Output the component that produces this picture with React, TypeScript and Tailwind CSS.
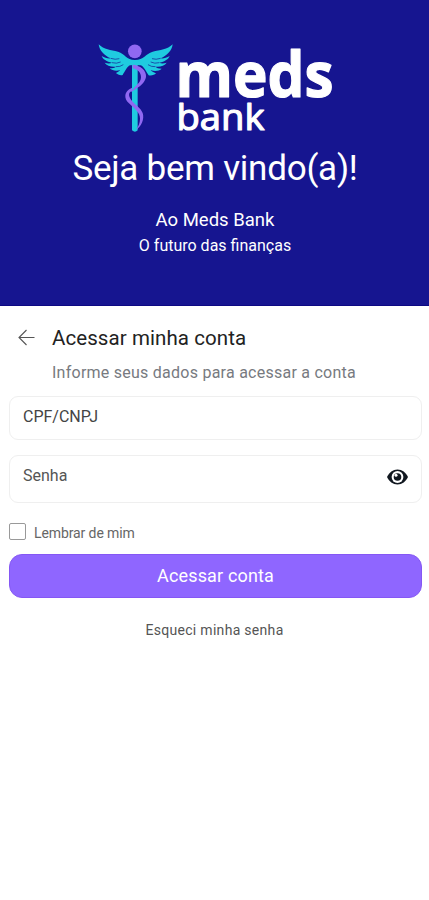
function Logo() {
  return (
    <svg className="block h-[105px] w-[250px] overflow-visible" viewBox="0 0 250 105" aria-label="meds bank">
      <g transform="scale(0.33333)">
        <g fill="#1fcbe0">
          <path d="M26 28 C42 45 62 44 84 50 C106 56 108 75 135 75 L135 90 L120 91 C112 94 104 110 98 120 C90 122 82 118 78 114 C84 111 88 108 91 105 C80 109 66 107 59 100 C68 100 74 98 78 95 C64 97 50 92 44 83 C53 86 60 86 66 83 C50 80 38 72 35 63 C44 69 54 71 62 70 C43 62 28 47 26 28Z" />
          <path d="M248 28 C232 45 210 44 188 50 C166 56 162 75 135 75 L135 90 L152 91 C162 94 168 110 176 121 C184 123 194 120 198 115 C190 112 185 109 182 105 C193 110 208 108 215 101 C206 101 200 99 196 95 C210 97 224 92 230 83 C221 86 214 86 208 83 C224 80 236 72 239 63 C230 69 220 71 212 70 C231 62 246 47 248 28Z" />
        </g>
        <g fill="none" stroke="#161590" strokeWidth="2">
          <path d="M62 70 Q76 75 88 71M66 83 Q80 87 92 81M78 95 Q90 96 100 89" />
          <path d="M212 70 Q198 75 186 71M208 83 Q194 87 182 81M196 95 Q184 96 174 89" />
        </g>
        <path d="M126 88 H143 V286 Q135 294 126 286Z" fill="#1fcbe0" />
        <path d="M128 89 C149 90 171 106 168 126 C165 143 151 153 137 162 L123 172 C133 153 153 145 153 127 C153 112 143 103 128 100Z" fill="#9068f2" />
        <path d="M126 158 C101 169 101 190 117 205 C131 219 151 233 150 251 C150 264 145 275 138 284 C154 276 164 252 158 234 C153 218 132 207 123 194 C114 181 116 171 126 169Z" fill="#9068f2" />
        <circle cx="134.500" cy="49" r="20.500" fill="#9068f2" />
      </g>
      <g fill="#fff" stroke="#fff" strokeLinejoin="round" fontFamily="Open Sans, Noto Sans, sans-serif">
        <text x="85.500" y="61.500" fontSize="62.500" fontWeight="700" strokeWidth="1.200" textLength="158" lengthAdjust="spacingAndGlyphs">meds</text>
        <text x="86.500" y="95" fontSize="36.500" fontWeight="500" strokeWidth="1.200" textLength="88" lengthAdjust="spacingAndGlyphs">bank</text>
      </g>
    </svg>
  );
}

export default function App() {
  return (
    <main className="flex min-h-[900px] w-full flex-col bg-white font-['Roboto',sans-serif]">
      <header className="flex h-[306px] flex-col items-center border-b border-[#0d0983] bg-[#161590] pt-[35px] text-white">
        <div className="w-[249px]">
          <Logo />
        </div>
        <h1 className="mt-[7px] ml-[1px] text-[35px] leading-[44px] tracking-[-0.25px] whitespace-nowrap">Seja bem vindo(a)!</h1>
        <p className="mt-[17px] ml-[1px] text-[18.500px] leading-[24px]">Ao Meds Bank</p>
        <p className="mt-[2px] ml-[1px] text-[16px] leading-[24px]">O futuro das finanças</p>
      </header>

      <form className="flex flex-col px-[9px]">
        <div className="flex h-[63px] items-center pl-[9px]">
          <svg className="h-[17px] w-[17px]" viewBox="0 0 17 17" fill="none" stroke="#555" strokeWidth="1.100">
            <path d="M16.500 8.500H1M8.500 1L1 8.500l7.500 7.500" />
          </svg>
          <h2 className="ml-[17px] text-[20.500px] leading-[30px] tracking-[0.080px] whitespace-nowrap text-[#222]">Acessar minha conta</h2>
        </div>
        <p className="-mt-[6px] pl-[43px] text-[16px] leading-[20px] tracking-[0.25px] whitespace-nowrap text-[#777a80]">Informe seus dados para acessar a conta</p>
        <div className="mt-[13px] flex h-[44px] w-[413px] items-center rounded-[9px] border border-[#efefef] pb-[2px] pl-[13px] text-[16px] text-[#444]">
          CPF/CNPJ
        </div>
        <div className="mt-[15px] flex h-[48px] w-[413px] items-center justify-between rounded-[9px] border border-[#efefef] pr-[13px] pl-[13px] text-[16px] text-[#555]">
          <span className="pb-[6px]">Senha</span>
          <svg className="mt-[-4px] h-[16px] w-[21px]" viewBox="0 0 21 16">
            <path d="M0 8C2 3.500 6 .5 10.500 .5S19 3.500 21 8c-2 4.500-6 7.500-10.500 7.500S2 12.500 0 8Z" fill="#111820" />
            <circle cx="10.500" cy="8" r="5.900" fill="#fff" />
            <circle cx="10.500" cy="8" r="3.800" fill="#111820" />
            <circle cx="9" cy="6.300" r="1.500" fill="#fff" />
          </svg>
        </div>
        <label className="mt-[19px] flex h-[18px] items-center">
          <input type="checkbox" className="h-[17px] w-[17px] appearance-none rounded-[2px] border border-[#999]" />
          <span className="ml-[8px] pt-[4px] text-[14px] tracking-[-0.1px] text-[#666]">Lembrar de mim</span>
        </label>
        <button type="button" className="mt-[14px] h-[44px] w-[413px] rounded-[13px] border border-[#8557f4] bg-[#8f66ff] pb-[2px] text-[18px] tracking-[0.150px] text-white">
          Acessar conta
        </button>
        <a className="mt-[22px] self-center text-[14px] leading-[20px] tracking-[0.3px] text-[#555]">Esqueci minha senha</a>
      </form>
    </main>
  );
}
